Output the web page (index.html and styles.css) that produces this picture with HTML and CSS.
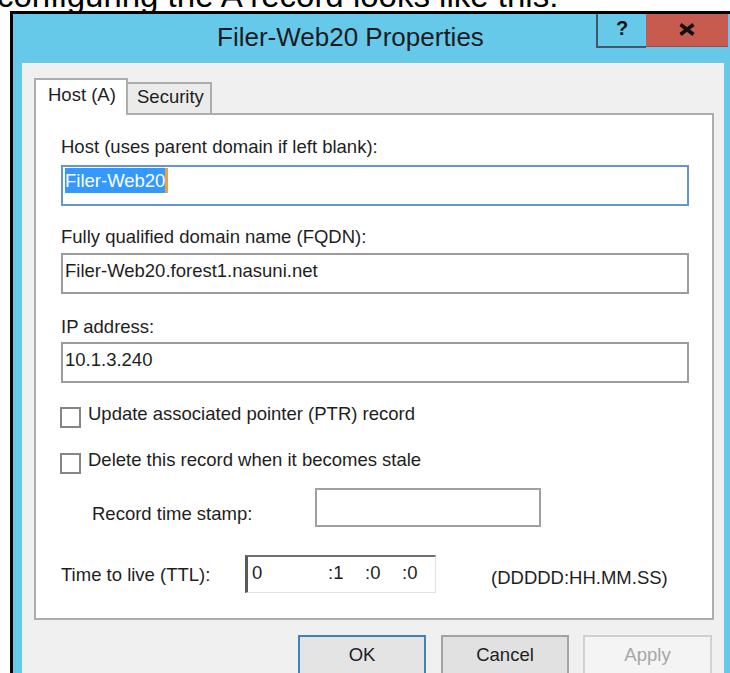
FILE: index.html
```html
<!DOCTYPE html>
<html lang="en">
<head>
<meta charset="utf-8">
<title>Filer-Web20 Properties</title>
<link rel="stylesheet" href="styles.css">
</head>
<body>
<div class="caption"><p>configuring the A record looks like this:</p></div>

<div class="window">
  <div class="titlebar">
    <div class="title">Filer-Web20 Properties</div>
    <div class="caption-buttons">
      <div class="cbtn help">?</div>
      <div class="cbtn close">
        <svg width="18" height="13" viewBox="0 0 18 13" aria-hidden="true">
          <path d="M2.5 1.5 L15.5 11.5 M15.5 1.5 L2.5 11.5" stroke="#111" stroke-width="3.6" stroke-linecap="butt" fill="none"/>
        </svg>
      </div>
    </div>
  </div>

  <div class="client">
    <div class="tabs">
      <div class="tab active">Host (A)</div>
      <div class="tab">Security</div>
    </div>

    <div class="panel">
      <div class="label l-host">Host (uses parent domain if left blank):</div>
      <div class="field focused"><span class="sel">Filer-Web20</span><span class="caret"></span></div>

      <div class="label l-fqdn">Fully qualified domain name (FQDN):</div>
      <div class="field f-fqdn">Filer-Web20.forest1.nasuni.net</div>

      <div class="label l-ip">IP address:</div>
      <div class="field f-ip">10.1.3.240</div>

      <div class="check c-ptr">
        <span class="box"></span>
        <span class="check-text">Update associated pointer (PTR) record</span>
      </div>
      <div class="check c-stale">
        <span class="box"></span>
        <span class="check-text">Delete this record when it becomes stale</span>
      </div>

      <div class="stamp-row">
        <span class="stamp-label">Record time stamp:</span>
        <span class="stamp-box"></span>
      </div>

      <div class="ttl-row">
        <span class="ttl-label">Time to live (TTL):</span>
        <span class="ttl-box">
          <span class="seg s-days">0</span><span class="seg s-part">:1</span><span class="seg s-part">:0</span><span class="seg">:0</span>
        </span>
        <span class="ttl-format">(DDDDD:HH.MM.SS)</span>
      </div>
    </div>

    <div class="buttons">
      <div class="btn default">OK</div>
      <div class="btn">Cancel</div>
      <div class="btn disabled">Apply</div>
    </div>
  </div>
</div>
</body>
</html>
```

FILE: styles.css
```css
* {
  box-sizing: border-box;
}

html, body {
  margin: 0;
  padding: 0;
}

body {
  width: 730px;
  height: 673px;
  overflow: hidden;
  background: #ffffff;
  font-family: "Liberation Sans", Arial, sans-serif;
  color: #1e1e1e;
}

/* sentence above the dialog, only its lower edge shows */
.caption {
  height: 11px;
  overflow: hidden;
}

.caption p {
  margin: -21px 0 0 -3px;
  font-size: 33px;
  line-height: 33px;
  white-space: nowrap;
  color: #000;
}

/* dialog frame */
.window {
  margin-left: 10px;
  height: 662px;
  border-top: 3px solid #000;
  border-left: 3px solid #000;
  background: #66c9ea;
  display: flex;
  flex-direction: column;
}

.titlebar {
  height: 49px;
  display: flex;
  align-items: flex-start;
  flex: none;
}

.title {
  flex: 1;
  padding-left: 204px;
  font-size: 26px;
  line-height: 47px;
  color: #1c1c1c;
  white-space: nowrap;
}

.caption-buttons {
  display: flex;
  margin-right: 2px;
}

.cbtn {
  height: 34px;
  display: flex;
  align-items: center;
  justify-content: center;
}

.help {
  width: 50px;
  border-left: 2px solid #3f5968;
  border-bottom: 2px solid #3f5968;
  font-weight: bold;
  font-size: 20px;
  color: #141414;
  padding-bottom: 3px;
}

.close {
  width: 82px;
  height: 33px;
  background: #c85b4f;
  border-bottom: 1px solid #a84a40;
  padding-bottom: 2px;
}

/* client area */
.client {
  flex: 1;
  margin: 0 6px 0 9px;
  background: #f0f0f0;
  border-top: 1px solid #f7f7f7;
  padding: 14px 10px 0 12px;
}

.tabs {
  display: flex;
  align-items: flex-end;
  height: 35px;
  position: relative;
  z-index: 1;
}

.tab {
  font-size: 18.5px;
  white-space: nowrap;
  border: 2px solid #adadad;
  border-bottom: none;
}

.tab.active {
  width: 94px;
  height: 37px;
  margin-bottom: -2px;
  background: #ffffff;
  padding-left: 12px;
  line-height: 29px;
}

.tab:not(.active) {
  width: 84px;
  height: 31px;
  border-left: none;
  background: #ebebeb;
  padding-left: 9px;
  line-height: 25px;
}

.panel {
  width: 680px;
  height: 507px;
  background: #ffffff;
  border: 2px solid #adadad;
  padding: 21px 0 0 25px;
  font-size: 18.5px;
}

.label {
  line-height: 22px;
  white-space: nowrap;
}

.l-fqdn { margin-top: 20px; }
.l-ip { margin-top: 22px; }

.field {
  width: 628px;
  height: 41px;
  margin-top: 7px;
  border: 2px solid #9c9c9c;
  background: #ffffff;
  padding: 3px 2px 0;
  line-height: 25px;
  white-space: nowrap;
}

.field.focused {
  border-color: #6796cb;
  padding-top: 1px;
  display: flex;
  align-items: flex-start;
}

.f-fqdn { margin-top: 5px; }
.f-ip { margin-top: 4px; }

.sel {
  height: 25px;
  background: #3399ff;
  color: #ffffff;
}

.caret {
  width: 3px;
  height: 25px;
  background: #f0a040;
}

/* checkboxes */
.check {
  display: flex;
  align-items: flex-start;
  height: 21px;
  white-space: nowrap;
}

.c-ptr { margin-top: 24px; }
.c-stale { margin-top: 25px; }

.box {
  width: 21px;
  height: 21px;
  margin-left: -1px;
  border: 2px solid #858585;
  background: #ffffff;
  flex: none;
}

.check-text {
  margin-left: 7px;
  line-height: 22px;
}

.c-ptr .check-text { margin-top: -4px; }
.c-stale .check-text { margin-top: -4px; }

/* record time stamp */
.stamp-row {
  display: flex;
  align-items: flex-start;
  margin-top: 14px;
  padding-left: 31px;
}

.stamp-label {
  width: 223px;
  margin-top: 15px;
  line-height: 22px;
  white-space: nowrap;
}

.stamp-box {
  width: 226px;
  height: 39px;
  border: 2px solid #a0a0a0;
  background: #ffffff;
}

/* time to live */
.ttl-row {
  display: flex;
  align-items: flex-start;
  margin-top: 28px;
}

.ttl-label {
  width: 184px;
  margin-top: 9px;
  line-height: 22px;
  white-space: nowrap;
}

.ttl-box {
  width: 191px;
  height: 38px;
  display: flex;
  background: #ffffff;
  border-top: 2px solid #707070;
  border-left: 3px solid #5a5a5a;
  border-right: 1px solid #e2e2e2;
  border-bottom: 1px solid #e2e2e2;
  padding: 3px 0 0 4px;
  line-height: 25px;
}

.seg {
  white-space: nowrap;
}

.s-days { width: 76px; }
.s-part { width: 37px; }

.ttl-format {
  margin: 12px 0 0 55px;
  line-height: 22px;
  white-space: nowrap;
}

/* dialog buttons */
.buttons {
  display: flex;
  justify-content: flex-end;
  margin: 15px 2px 0 0;
}

.btn {
  width: 128px;
  height: 40px;
  margin-left: 15px;
  background: #e1e1e1;
  border: 2px solid #a3a3a3;
  font-size: 18.5px;
  line-height: 36px;
  text-align: center;
  color: #1e1e1e;
}

.btn.default {
  border-color: #3f82bd;
  background: #e4e4e4;
}

.btn.disabled {
  width: 129px;
  margin-left: 14px;
  background: #f4f4f4;
  border-color: #d0d0d0;
  color: #a6a6a6;
}
```
